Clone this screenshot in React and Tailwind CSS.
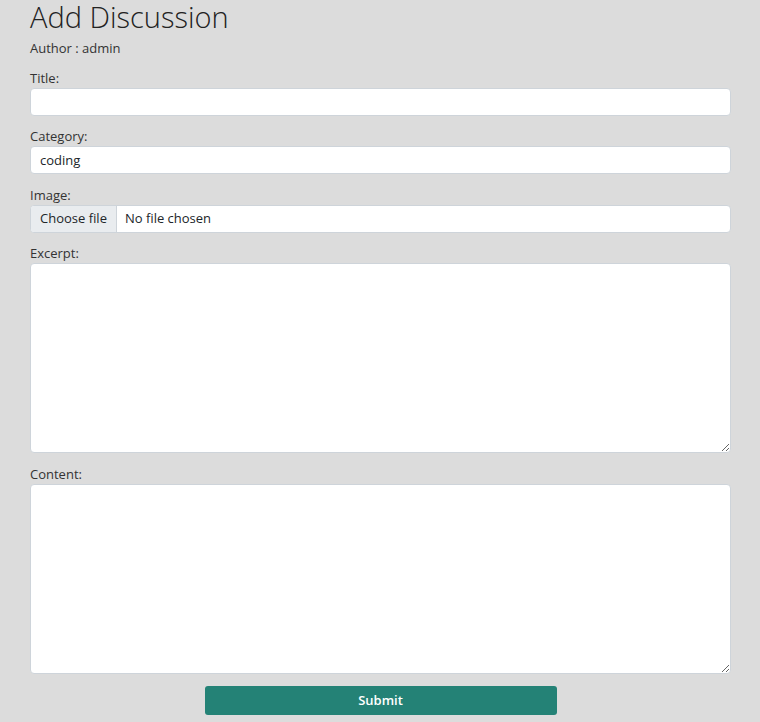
export default function App() {
  const field = "block w-full h-[28px] rounded-[4px] border border-[#ced4da] bg-white px-[9px] text-[13px] text-[#212529] outline-none";
  const label = "block h-[20px] leading-[20px] text-[13px] text-[#333]";
  const area = "block w-full rounded-[4px] border border-[#ced4da] bg-white px-[9px] py-[6px] text-[13px] outline-none";

  return (
    <div className="min-h-[722px] bg-[#dcdcdc] font-['Open_Sans',sans-serif] text-[#212529]">
      <div className="pl-[30px] pr-[29px]">
        <h1 className="h-[35px] leading-[34px] text-[29px] font-light text-[#222]">Add Discussion</h1>
        <p className="mt-[3px] h-[20px] leading-[20px] text-[13px] text-[#333]">Author : admin</p>

        <form onSubmit={(e) => e.preventDefault()}>
          <label className={label + " mt-[10px]"}>Title:</label>
          <input type="text" className={field} />

          <label className={label + " mt-[10px]"}>Category:</label>
          <input type="text" defaultValue="coding" className={field} />

          <label className={label + " mt-[11px]"}>Image:</label>
          <div className="flex h-[28px] w-full overflow-hidden rounded-[4px] border border-[#ced4da] bg-white text-[13px]">
            <span className="flex w-[86px] items-center justify-center border-r border-[#ced4da] bg-[#e9ecef] text-[#212529]">Choose file</span>
            <span className="flex items-center pl-[8px] text-[#212529]">No file chosen</span>
          </div>

          <label className={label + " mt-[10px]"}>Excerpt:</label>
          <textarea className={area + " h-[190px]"} />

          <label className={label + " mt-[11px]"}>Content:</label>
          <textarea className={area + " h-[190px]"} />

          <div className="flex justify-center pt-[12px] pb-[8px]">
            <button type="submit" className="h-[29px] w-[352px] rounded-[3px] bg-[#248276] text-[13px] font-semibold text-white">Submit</button>
          </div>
        </form>
      </div>
    </div>
  );
}
